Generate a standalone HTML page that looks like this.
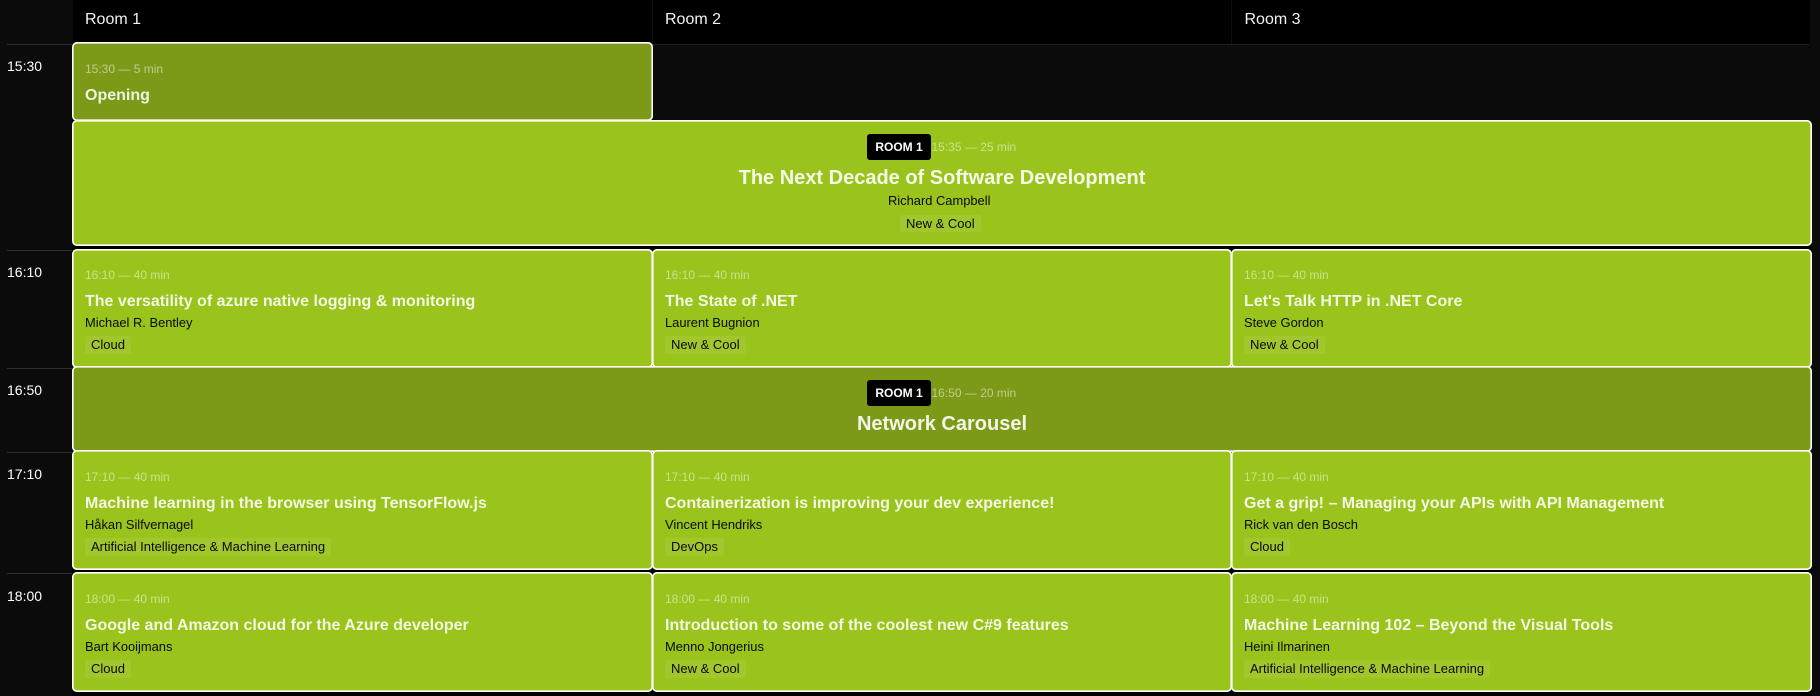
<!DOCTYPE html>
<html>
<head>
<meta charset="utf-8">
<style>
html,body{margin:0;padding:0;width:1820px;height:696px;overflow:hidden;background:#0b0b0b;font-family:"Liberation Sans",Arial,sans-serif}
#root{position:relative;width:1820px;height:696px;overflow:hidden}
.abs{position:absolute}
.room{position:absolute;top:10px;font-size:16px;line-height:20px;color:#f2f2f2}
.hr{position:absolute;left:7px;width:65px;height:1px;background:#2c2c2c}
.clock{position:absolute;left:7px;font-size:14px;line-height:20px;color:#fff}
.c{position:absolute;box-sizing:border-box;background:#9ac31c;box-shadow:inset 0 0 0 1.6px #fff;border-radius:5px}
.d{background:#7c9a17}
.c1{left:71.5px;width:581.5px}
.c2{left:651.5px;width:580.5px}
.c3{left:1230.5px;width:581.5px}
.w{left:71.5px;width:1740.5px}
.c>*{position:absolute;white-space:nowrap}
.t{left:13.5px;font-size:12px;line-height:20px;color:rgba(255,255,255,.5)}
.n{left:13.5px;font-size:16px;line-height:20px;font-weight:bold;color:rgba(255,255,255,.88)}
.s{left:13.5px;font-size:12.9px;line-height:20px;color:#0a0a0a}
.g{left:13.5px;font-size:13px;line-height:18px;height:18px;padding:0 6px;background:rgba(255,255,255,.08);border-radius:2px;color:#0a0a0a}
.b{left:795.5px;width:64px;height:26px;background:#000;border-radius:3px;color:#fff;font-size:12px;line-height:26px;font-weight:bold;text-align:center}
.k{left:0;width:1741px;text-align:center;font-size:20px;line-height:24px;font-weight:bold;color:rgba(255,255,255,.9)}
.tw{left:860px;font-size:12px;line-height:20px;color:rgba(255,255,255,.5)}
.r3 .t{top:16px}.r3 .n{top:43px}.r3 .s{top:64px}.r3 .g{top:87px}
.r5 .t{top:17px}.r5 .n{top:44px}.r5 .s{top:65px}.r5 .g{top:88px}
.r6 .t{top:17px}.r6 .n{top:44px}.r6 .s{top:65px}.r6 .g{top:88px}
</style>
</head>
<body>
<div id="root">
  <div class="abs" style="left:72px;top:44px;width:1740px;height:652px;background:#000"></div>
  <div class="abs" style="left:653px;top:44px;width:1159px;height:77px;background:#0b0b0b"></div>
  <div class="abs" style="left:73px;top:0;width:1737px;height:44px;background:#000"></div>
  <div class="abs" style="left:652px;top:0;width:1px;height:44px;background:#0f0f0f"></div>
  <div class="abs" style="left:1231px;top:0;width:1px;height:44px;background:#0f0f0f"></div>
  <div class="abs" style="left:652px;top:44px;width:1157px;height:1px;background:#222"></div>

  <div class="room" style="left:85px">Room 1</div>
  <div class="room" style="left:665px">Room 2</div>
  <div class="room" style="left:1244.5px">Room 3</div>

  <div class="hr" style="top:44px"></div>
  <div class="hr" style="top:250px"></div>
  <div class="hr" style="top:368px"></div>
  <div class="hr" style="top:452px"></div>
  <div class="hr" style="top:573px"></div>

  <div class="clock" style="top:56px">15:30</div>
  <div class="clock" style="top:262px">16:10</div>
  <div class="clock" style="top:380px">16:50</div>
  <div class="clock" style="top:464px">17:10</div>
  <div class="clock" style="top:586px">18:00</div>

  <div class="c d c1" style="top:42px;height:79px">
    <div class="t" style="top:17px">15:30 — 5 min</div>
    <div class="n" style="top:44px">Opening</div>
  </div>

  <div class="c w" style="top:120px;height:126px">
    <div class="b" style="top:14px">ROOM 1</div>
    <div class="tw" style="top:17px">15:35 — 25 min</div>
    <div class="k" style="top:46px">The Next Decade of Software Development</div>
    <div class="s" style="left:816.5px;top:71px">Richard Campbell</div>
    <div class="g" style="left:828.5px;top:95px;height:17px;line-height:17px">New &amp; Cool</div>
  </div>

  <div class="c c1 r3" style="top:249px;height:119px">
    <div class="t">16:10 — 40 min</div>
    <div class="n">The versatility of azure native logging &amp; monitoring</div>
    <div class="s">Michael R. Bentley</div>
    <div class="g">Cloud</div>
  </div>
  <div class="c c2 r3" style="top:249px;height:119px">
    <div class="t">16:10 — 40 min</div>
    <div class="n">The State of .NET</div>
    <div class="s">Laurent Bugnion</div>
    <div class="g">New &amp; Cool</div>
  </div>
  <div class="c c3 r3" style="top:249px;height:119px">
    <div class="t">16:10 — 40 min</div>
    <div class="n">Let's Talk HTTP in .NET Core</div>
    <div class="s">Steve Gordon</div>
    <div class="g">New &amp; Cool</div>
  </div>

  <div class="c d w" style="top:366px;height:86px">
    <div class="b" style="top:14px">ROOM 1</div>
    <div class="tw" style="top:17px">16:50 — 20 min</div>
    <div class="k" style="top:46px">Network Carousel</div>
  </div>

  <div class="c c1 r5" style="top:450px;height:120px">
    <div class="t">17:10 — 40 min</div>
    <div class="n">Machine learning in the browser using TensorFlow.js</div>
    <div class="s">Håkan Silfvernagel</div>
    <div class="g">Artificial Intelligence &amp; Machine Learning</div>
  </div>
  <div class="c c2 r5" style="top:450px;height:120px">
    <div class="t">17:10 — 40 min</div>
    <div class="n">Containerization is improving your dev experience!</div>
    <div class="s">Vincent Hendriks</div>
    <div class="g">DevOps</div>
  </div>
  <div class="c c3 r5" style="top:450px;height:120px">
    <div class="t">17:10 — 40 min</div>
    <div class="n">Get a grip! – Managing your APIs with API Management</div>
    <div class="s">Rick van den Bosch</div>
    <div class="g">Cloud</div>
  </div>

  <div class="c c1 r6" style="top:572px;height:120px">
    <div class="t">18:00 — 40 min</div>
    <div class="n">Google and Amazon cloud for the Azure developer</div>
    <div class="s">Bart Kooijmans</div>
    <div class="g">Cloud</div>
  </div>
  <div class="c c2 r6" style="top:572px;height:120px">
    <div class="t">18:00 — 40 min</div>
    <div class="n">Introduction to some of the coolest new C#9 features</div>
    <div class="s">Menno Jongerius</div>
    <div class="g">New &amp; Cool</div>
  </div>
  <div class="c c3 r6" style="top:572px;height:120px">
    <div class="t">18:00 — 40 min</div>
    <div class="n">Machine Learning 102 – Beyond the Visual Tools</div>
    <div class="s">Heini Ilmarinen</div>
    <div class="g">Artificial Intelligence &amp; Machine Learning</div>
  </div>
</div>
</body>
</html>
